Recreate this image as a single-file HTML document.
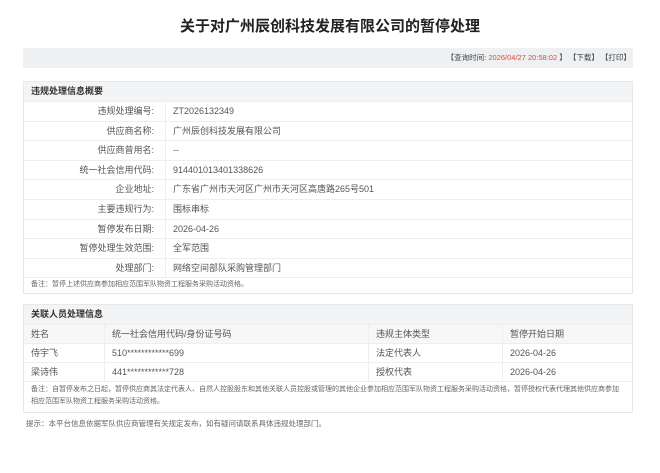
<!DOCTYPE html>
<html><head><meta charset="utf-8"><style>
body{margin:0;background:#fff;font-family:"Liberation Sans","Noto Sans CJK SC",sans-serif;color:#555;font-size:9px;}
.title{position:absolute;left:0;width:660px;top:15px;text-align:center;font-size:15px;font-weight:bold;color:#222;}
.bar{position:absolute;left:23px;width:610px;top:48px;height:20px;background:#eef0f2;text-align:right;line-height:20px;font-size:7.5px;color:#444;}
.bar span.r{color:#e0483a}
.box{position:absolute;left:23px;width:608px;border:1px solid #e8e8e8;}
.hd{background:#f3f4f5;height:19px;line-height:19px;padding-left:7px;font-weight:bold;color:#333;font-size:9px;}
.row{height:18.6px;border-top:1px solid #eee;display:flex;line-height:18.6px;}
.row .l{width:130px;text-align:right;padding-right:11px;border-right:1px solid #eee;color:#555;}
.row .v{padding-left:7px;}
.note{border-top:1px solid #eee;font-size:7px;padding:1px 7px 2px;line-height:12px;color:#666;}
.t{display:flex;height:18px;line-height:18px;border-top:1px solid #eee;}
.t div{padding-left:7px;border-right:1px solid #eee;box-sizing:border-box;}
.t div:last-child{border-right:none}
.c1{width:81px}.c2{width:264px}.c3{width:134px}.c4{flex:1}
.tip{position:absolute;left:26px;top:418px;font-size:7.5px;color:#666;}
</style></head><body>
<div class="title">关于对广州辰创科技发展有限公司的暂停处理</div>
<div class="bar">【查询时间: <span class="r">2026/04/27 20:58:02</span> 】 【下载】 【打印】&nbsp;</div>
<div class="box" style="top:81px">
<div class="hd">违规处理信息概要</div>
<div class="row"><div class="l">违规处理编号:</div><div class="v">ZT2026132349</div></div>
<div class="row"><div class="l">供应商名称:</div><div class="v">广州辰创科技发展有限公司</div></div>
<div class="row"><div class="l">供应商曾用名:</div><div class="v">--</div></div>
<div class="row"><div class="l">统一社会信用代码:</div><div class="v">914401013401338626</div></div>
<div class="row"><div class="l">企业地址:</div><div class="v">广东省广州市天河区广州市天河区高唐路265号501</div></div>
<div class="row"><div class="l">主要违规行为:</div><div class="v">围标串标</div></div>
<div class="row"><div class="l">暂停发布日期:</div><div class="v">2026-04-26</div></div>
<div class="row"><div class="l">暂停处理生效范围:</div><div class="v">全军范围</div></div>
<div class="row"><div class="l">处理部门:</div><div class="v">网络空间部队采购管理部门</div></div>
<div class="note">备注：暂停上述供应商参加相应范围军队物资工程服务采购活动资格。</div>
</div>
<div class="box" style="top:304px">
<div class="hd">关联人员处理信息</div>
<div class="t" style="background:#f7f7f7"><div class="c1">姓名</div><div class="c2">统一社会信用代码/身份证号码</div><div class="c3">违规主体类型</div><div class="c4">暂停开始日期</div></div>
<div class="t"><div class="c1">侍宇飞</div><div class="c2">510************699</div><div class="c3">法定代表人</div><div class="c4">2026-04-26</div></div>
<div class="t"><div class="c1">梁诗伟</div><div class="c2">441************728</div><div class="c3">授权代表</div><div class="c4">2026-04-26</div></div>
<div class="note" style="padding:2px 7px 4px">备注：自暂停发布之日起，暂停供应商其法定代表人、自然人控股股东和其他关联人员控股或管理的其他企业参加相应范围军队物资工程服务采购活动资格，暂停授权代表代理其他供应商参加相应范围军队物资工程服务采购活动资格。</div>
</div>
<div class="tip">提示：本平台信息依据军队供应商管理有关规定发布，如有疑问请联系具体违规处理部门。</div>
</body></html>
